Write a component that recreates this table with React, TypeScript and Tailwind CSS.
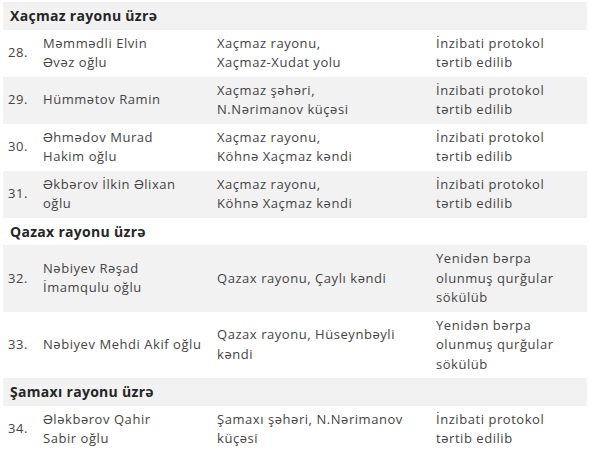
import React from 'react';

type Row = {
  no: string;
  name: string[];
  place: string[];
  status: string[];
};

type Group = {
  title: string;
  rows: Row[];
};

const protokol = ['İnzibati protokol', 'tərtib edilib'];
const sokulub = ['Yenidən bərpa', 'olunmuş qurğular', 'sökülüb'];

const groups: Group[] = [
  {
    title: 'Xaçmaz rayonu üzrə',
    rows: [
      { no: '28.', name: ['Məmmədli Elvin', 'Əvəz oğlu'], place: ['Xaçmaz rayonu,', 'Xaçmaz-Xudat yolu'], status: protokol },
      { no: '29.', name: ['Hümmətov Ramin'], place: ['Xaçmaz şəhəri,', 'N.Nərimanov küçəsi'], status: protokol },
      { no: '30.', name: ['Əhmədov Murad', 'Hakim oğlu'], place: ['Xaçmaz rayonu,', 'Köhnə Xaçmaz kəndi'], status: protokol },
      { no: '31.', name: ['Əkbərov İlkin Əlixan', 'oğlu'], place: ['Xaçmaz rayonu,', 'Köhnə Xaçmaz kəndi'], status: protokol },
    ],
  },
  {
    title: 'Qazax rayonu üzrə',
    rows: [
      { no: '32.', name: ['Nəbiyev Rəşad', 'İmamqulu oğlu'], place: ['Qazax rayonu, Çaylı kəndi'], status: sokulub },
      { no: '33.', name: ['Nəbiyev Mehdi Akif oğlu'], place: ['Qazax rayonu, Hüseynbəyli', 'kəndi'], status: sokulub },
    ],
  },
  {
    title: 'Şamaxı rayonu üzrə',
    rows: [
      { no: '34.', name: ['Ələkbərov Qahir', 'Sabir oğlu'], place: ['Şamaxı şəhəri, N.Nərimanov', 'küçəsi'], status: protokol },
    ],
  },
];

function Lines({ lines }: { lines: string[] }) {
  return (
    <>
      {lines.map((l, i) => (
        <div key={i} className="whitespace-nowrap">{l}</div>
      ))}
    </>
  );
}

export default function App() {
  let idx = 0;
  const stripe = () => (idx++ % 2 === 0 ? 'bg-[#f2f2f2]' : 'bg-white');

  return (
    <div className="w-[590px] h-[466px] bg-white pt-[2px] px-[3px] font-['Open_Sans',sans-serif] text-[13px] leading-[19.5px] tracking-[0.55px] text-[#444] overflow-hidden">
      <table className="w-[584px] table-fixed border-collapse">
        <colgroup>
          <col className="w-[35px]" />
          <col className="w-[174px]" />
          <col className="w-[219px]" />
          <col className="w-[156px]" />
        </colgroup>
        <tbody>
          {groups.map((g) => (
            <React.Fragment key={g.title}>
              <tr className={stripe()}>
                <td colSpan={4} className="px-[7px] py-[4px] font-bold text-[14px] tracking-[0.3px] text-[#262626]">
                  {g.title}
                </td>
              </tr>
              {g.rows.map((r) => (
                <tr key={r.no} className={stripe()}>
                  <td className="pl-[5px] py-[4px] align-middle">{r.no}</td>
                  <td className="pl-[5px] py-[4px] align-middle"><Lines lines={r.name} /></td>
                  <td className="pl-[5px] py-[4px] align-middle"><Lines lines={r.place} /></td>
                  <td className="pl-[5px] py-[4px] align-middle"><Lines lines={r.status} /></td>
                </tr>
              ))}
            </React.Fragment>
          ))}
        </tbody>
      </table>
    </div>
  );
}
